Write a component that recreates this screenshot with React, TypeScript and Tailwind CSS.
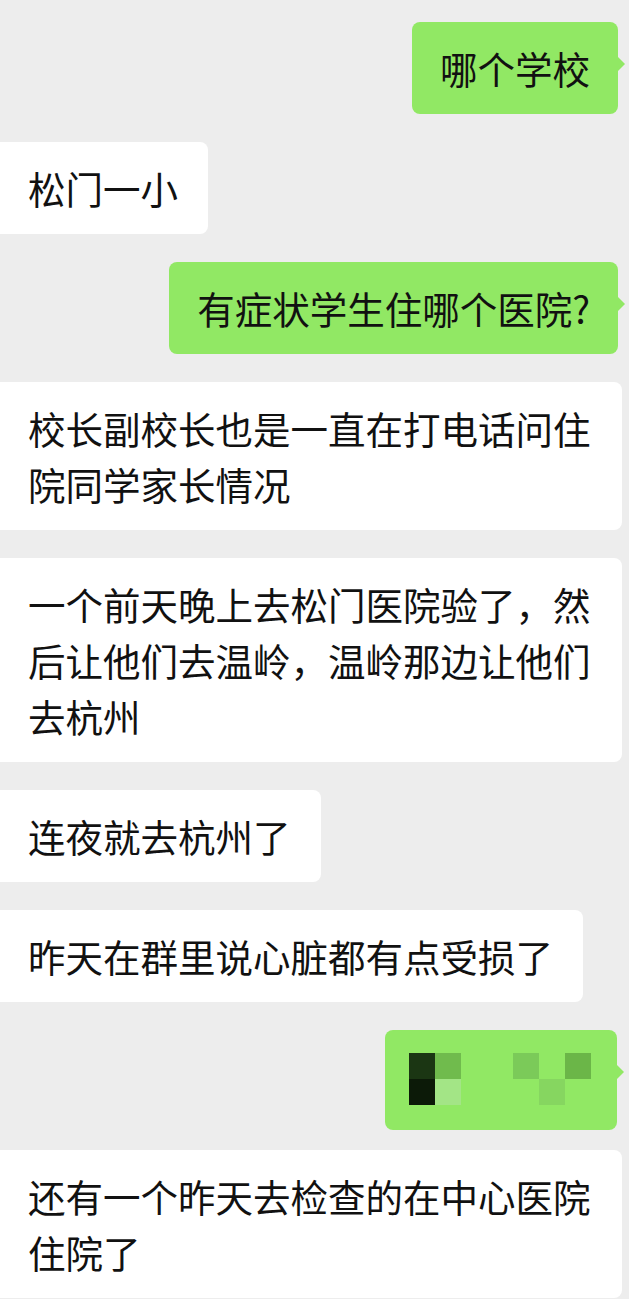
import React from 'react';

type Msg =
  | { side: 'left' | 'right'; text: string }
  | { side: 'right'; mosaic: true };

const messages: Msg[] = [
  { side: 'right', text: '哪个学校' },
  { side: 'left', text: '松门一小' },
  { side: 'right', text: '有症状学生住哪个医院?' },
  { side: 'left', text: '校长副校长也是一直在打电话问住院同学家长情况' },
  { side: 'left', text: '一个前天晚上去松门医院验了，然后让他们去温岭，温岭那边让他们去杭州' },
  { side: 'left', text: '连夜就去杭州了' },
  { side: 'left', text: '昨天在群里说心脏都有点受损了' },
  { side: 'right', mosaic: true },
  { side: 'left', text: '还有一个昨天去检查的在中心医院住院了' },
];

// blurred-out reply, 7 x 2 cells
const mosaicCells: (string | null)[] = [
  '#1b3613', '#70bb4d', null, null, '#7bca59', null, '#6bb648',
  '#0c1a08', '#a3e586', null, null, null, '#86d660', null,
];

const Tail: React.FC = () => (
  <span className="absolute right-[-7px] top-[34px] h-0 w-0 border-y-[8px] border-l-[8px] border-y-transparent border-l-[#91e864]" />
);

const Bubble: React.FC<{ msg: Msg }> = ({ msg }) => {
  if ('mosaic' in msg) {
    return (
      <div className="relative mr-[12px] mb-[-8px] self-end rounded-[8px] bg-[#91e864] pt-[23px] pr-[26px] pb-[25px] pl-[24px]">
        <div className="grid grid-cols-[repeat(7,26px)] grid-rows-[repeat(2,26px)]">
          {mosaicCells.map((c, i) => (
            <div key={i} style={c ? { backgroundColor: c } : undefined} />
          ))}
        </div>
        <Tail />
      </div>
    );
  }

  if (msg.side === 'right') {
    return (
      <div className="relative mr-[11px] self-end rounded-[8px] bg-[#91e864] px-[28px] py-[18px]">
        <p className="whitespace-nowrap">{msg.text}</p>
        <Tail />
      </div>
    );
  }

  return (
    <div className="max-w-[622px] self-start rounded-r-[8px] bg-white py-[18px] pr-[30px] pl-[28px]">
      <p>{msg.text}</p>
    </div>
  );
};

export default function App() {
  return (
    <div
      className="flex h-[1299px] w-full flex-col gap-[28px] overflow-hidden bg-[#ededed] pt-[22px] text-[37.5px] leading-[56px] text-[#111111]"
      style={{ fontFamily: '"Noto Sans CJK SC", "Noto Sans", sans-serif' }}
    >
      {messages.map((m, i) => (
        <Bubble key={i} msg={m} />
      ))}
    </div>
  );
}
